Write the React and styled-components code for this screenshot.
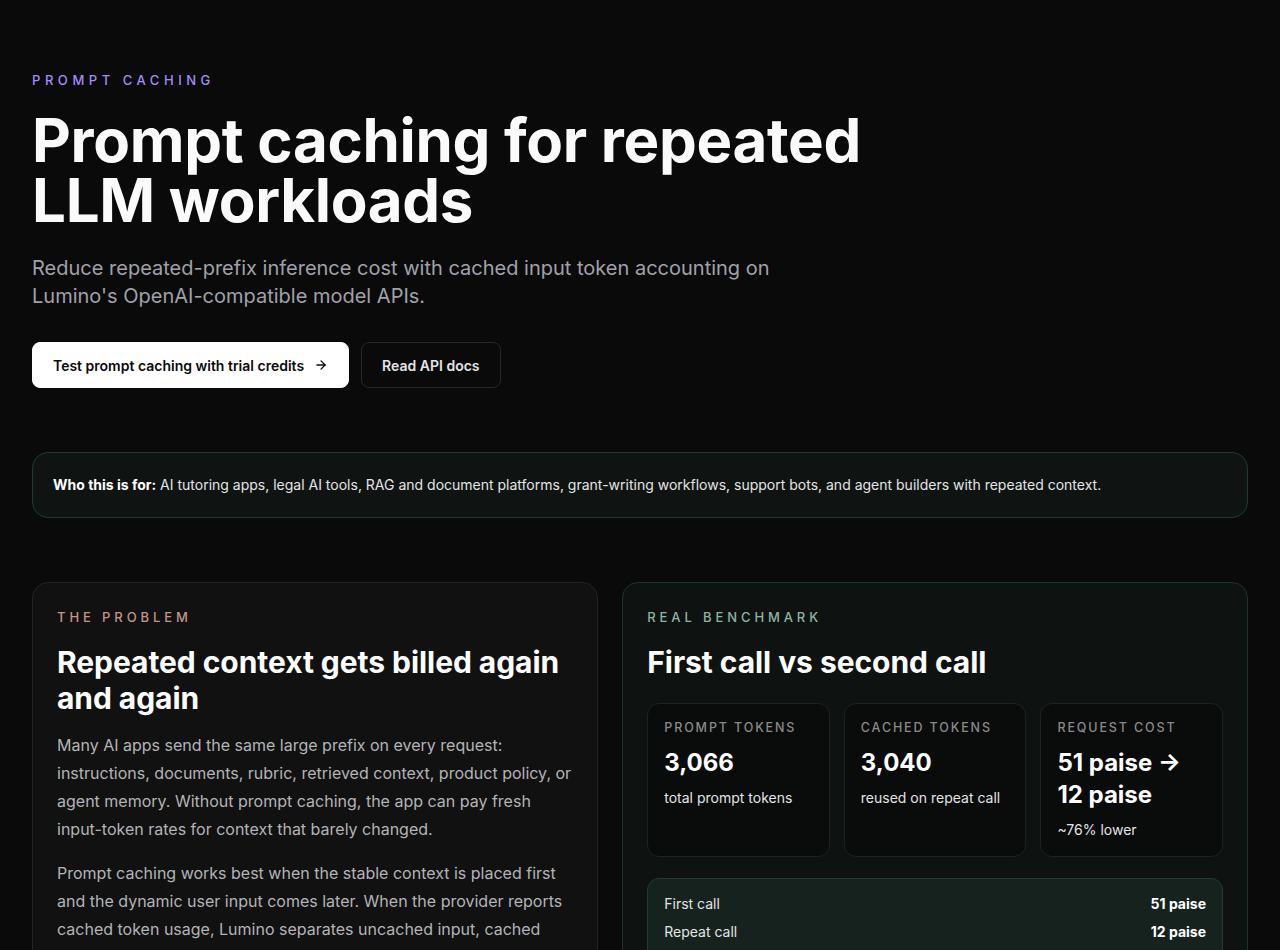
import React from "react";
import styled, { createGlobalStyle } from "styled-components";

const Global = createGlobalStyle`
  html, body { margin: 0; padding: 0; background: #0a0a0a; }
  body { font-family: Inter, "Noto Sans", sans-serif; color: #fafafa; -webkit-font-smoothing: antialiased; }
  * { box-sizing: border-box; }
`;

const Page = styled.main`
  padding: 70px 32px 40px;
  min-height: 950px;
`;

const Eyebrow = styled.div`
  font-size: 13px;
  line-height: 20px;
  letter-spacing: ${p => p.$spacing || "0.3em"};
  text-transform: uppercase;
  font-weight: 500;
  color: ${p => p.$color || "#a78bfa"};
`;

const Title = styled.h1`
  margin: 20px 0 0;
  font-size: 60px;
  line-height: 60px;
  font-weight: 700;
  letter-spacing: -0.005em;
  max-width: 900px;
`;

const Lead = styled.p`
  margin: 24px 0 0;
  font-size: 20px;
  line-height: 28px;
  color: #a1a1aa;
  max-width: 760px;
`;

const Actions = styled.div`
  display: flex;
  gap: 12px;
  margin-top: 32px;
`;

const Button = styled.a`
  display: inline-flex;
  align-items: center;
  gap: 10px;
  height: 46px;
  padding: 0 20px;
  border-radius: 8px;
  font-size: 14px;
  font-weight: 600;
  text-decoration: none;
  background: ${p => (p.$primary ? "#ffffff" : "#0a0a0a")};
  color: ${p => (p.$primary ? "#0a0a0a" : "#e4e4e7")};
  border: 1px solid ${p => (p.$primary ? "#ffffff" : "#27272a")};
`;

const Callout = styled.div`
  margin-top: 64px;
  padding: 22px 20px;
  border: 1px solid #1d3a2f;
  background: #0f1412;
  border-radius: 16px;
  font-size: 14px;
  line-height: 20px;
  color: #e4e4e7;
  b { color: #fff; font-weight: 700; }
`;

const Grid = styled.div`
  display: grid;
  grid-template-columns: 1fr 1.105fr;
  gap: 24px;
  margin-top: 64px;
`;

const Card = styled.section`
  border-radius: 16px;
  padding: 24px 24px 28px;
  border: 1px solid ${p => (p.$green ? "#1c332b" : "#232323")};
  background: ${p => (p.$green ? "#0e1312" : "#111111")};
`;

const CardTitle = styled.h2`
  margin: 17px 0 0;
  font-size: 30px;
  line-height: 36px;
  font-weight: 700;
  letter-spacing: -0.002em;
  color: #fff;
`;

const Body = styled.p`
  margin: 15px 0 0;
  font-size: 16px;
  line-height: 28px;
  color: #b4b4b8;
  & + & { margin-top: 16px; }
`;

const Stats = styled.div`
  display: grid;
  grid-template-columns: repeat(3, 1fr);
  gap: 14px;
  margin-top: 23px;
`;

const Stat = styled.div`
  background: #0a0b0b;
  border: 1px solid #1e2321;
  border-radius: 12px;
  padding: 15px 16px 16px;
`;

const StatLabel = styled.div`
  font-size: 12.5px;
  line-height: 18px;
  letter-spacing: 0.15em;
  text-transform: uppercase;
  font-weight: 500;
  color: #8a8a8a;
`;

const StatValue = styled.div`
  margin-top: 10px;
  font-size: 24px;
  line-height: 32px;
  font-weight: 700;
  color: #fff;
`;

const StatSub = styled.div`
  margin-top: 9px;
  font-size: 14px;
  line-height: 20px;
  color: #e4e4e7;
`;

const Table = styled.div`
  margin-top: 21px;
  background: #15221d;
  border: 1px solid #243a31;
  border-radius: 12px;
  padding: 15px 16px;
  display: flex;
  flex-direction: column;
  gap: 8px;
`;

const Row = styled.div`
  display: flex;
  justify-content: space-between;
  font-size: 14px;
  line-height: 20px;
  color: #e4e4e7;
  b { font-weight: 700; color: #fff; }
`;

const Arrow = () => (
  <svg width="14" height="14" viewBox="0 0 24 24" fill="none" stroke="currentColor" strokeWidth="2.2" strokeLinecap="round" strokeLinejoin="round">
    <path d="M5 12h14" />
    <path d="M12 5l7 7-7 7" />
  </svg>
);

export default function App() {
  return (
    <>
      <Global />
      <Page>
        <Eyebrow $spacing="0.35em">Prompt caching</Eyebrow>
        <Title>Prompt caching for repeated LLM workloads</Title>
        <Lead>
          Reduce repeated-prefix inference cost with cached input token accounting on Lumino's
          OpenAI-compatible model APIs.
        </Lead>
        <Actions>
          <Button $primary href="#">
            Test prompt caching with trial credits <Arrow />
          </Button>
          <Button href="#">Read API docs</Button>
        </Actions>
        <Callout>
          <b>Who this is for:</b> AI tutoring apps, legal AI tools, RAG and document platforms,
          grant-writing workflows, support bots, and agent builders with repeated context.
        </Callout>
        <Grid>
          <Card>
            <Eyebrow $color="#c2958b">The problem</Eyebrow>
            <CardTitle>Repeated context gets billed again and again</CardTitle>
            <Body>
              Many AI apps send the same large prefix on every request: instructions, documents,
              rubric, retrieved context, product policy, or agent memory. Without prompt caching,
              the app can pay fresh input-token rates for context that barely changed.
            </Body>
            <Body>
              Prompt caching works best when the stable context is placed first and the dynamic
              user input comes later. When the provider reports cached token usage, Lumino
              separates uncached input, cached input, and output in the usage record.
            </Body>
          </Card>
          <Card $green>
            <Eyebrow $color="#8fb3a2">Real benchmark</Eyebrow>
            <CardTitle>First call vs second call</CardTitle>
            <Stats>
              <Stat>
                <StatLabel>Prompt tokens</StatLabel>
                <StatValue>3,066</StatValue>
                <StatSub>total prompt tokens</StatSub>
              </Stat>
              <Stat>
                <StatLabel>Cached tokens</StatLabel>
                <StatValue>3,040</StatValue>
                <StatSub>reused on repeat call</StatSub>
              </Stat>
              <Stat>
                <StatLabel>Request cost</StatLabel>
                <StatValue>51 paise → 12 paise</StatValue>
                <StatSub>~76% lower</StatSub>
              </Stat>
            </Stats>
            <Table>
              <Row>
                <span>First call</span>
                <b>51 paise</b>
              </Row>
              <Row>
                <span>Repeat call</span>
                <b>12 paise</b>
              </Row>
              <Row>
                <span>Savings</span>
                <b>~76%</b>
              </Row>
            </Table>
          </Card>
        </Grid>
      </Page>
    </>
  );
}
